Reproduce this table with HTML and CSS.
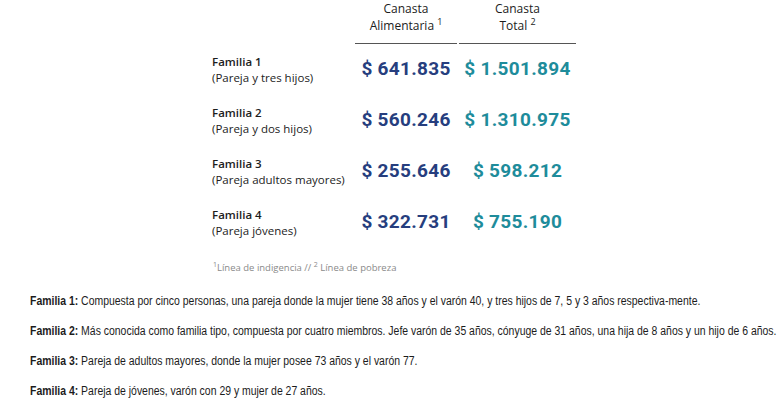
FILE: index.html
```html
<!DOCTYPE html>
<html lang="es">
<head>
<meta charset="utf-8">
<link rel="stylesheet" href="styles.css">
</head>
<body>
<div class="page">
  <div class="table">
    <div class="row head">
      <div class="label"></div>
      <div class="col c1"><span>Canasta</span><span>Alimentaria <sup>1</sup></span></div>
      <div class="col c2"><span>Canasta</span><span>Total <sup>2</sup></span></div>
    </div>
    <div class="row">
      <div class="label"><b>Familia 1</b><span>(Pareja y tres hijos)</span></div>
      <div class="num c1 blue">$ 641.835</div>
      <div class="num c2 teal">$ 1.501.894</div>
    </div>
    <div class="row">
      <div class="label"><b>Familia 2</b><span>(Pareja y dos hijos)</span></div>
      <div class="num c1 blue">$ 560.246</div>
      <div class="num c2 teal">$ 1.310.975</div>
    </div>
    <div class="row">
      <div class="label"><b>Familia 3</b><span>(Pareja adultos mayores)</span></div>
      <div class="num c1 blue">$ 255.646</div>
      <div class="num c2 teal">$ 598.212</div>
    </div>
    <div class="row">
      <div class="label"><b>Familia 4</b><span>(Pareja jóvenes)</span></div>
      <div class="num c1 blue">$ 322.731</div>
      <div class="num c2 teal">$ 755.190</div>
    </div>
    <p class="note"><sup>1</sup>Línea de indigencia // <sup>2</sup> Línea de pobreza</p>
  </div>
  <div class="desc">
    <p><b>Familia 1:</b> Compuesta por cinco personas, una pareja donde la mujer tiene 38 años y el varón 40, y tres hijos de 7, 5 y 3 años respectiva-mente.</p>
    <p><b>Familia 2:</b> Más conocida como familia tipo, compuesta por cuatro miembros. Jefe varón de 35 años, cónyuge de 31 años, una hija de 8 años y un hijo de 6 años.</p>
    <p><b>Familia 3:</b> Pareja de adultos mayores, donde la mujer posee 73 años y el varón 77.</p>
    <p><b>Familia 4:</b> Pareja de jóvenes, varón con 29 y mujer de 27 años.</p>
  </div>
</div>
</body>
</html>
```

FILE: styles.css
```css
html, body {
  margin: 0;
  padding: 0;
  background: #ffffff;
}
.page {
  width: 784px;
  height: 411px;
  overflow: hidden;
  font-family: "Open Sans", "Noto Sans", sans-serif;
  color: #1c1c1c;
}
.table {
  padding: 0 0 0 212px;
}
.row {
  display: flex;
  align-items: center;
  height: 51px;
}
.row.head {
  height: 44px;
  align-items: flex-end;
}
.label {
  width: 143px;
  display: flex;
  flex-direction: column;
  font-size: 11.5px;
  line-height: 16px;
}
.label b {
  font-weight: 600;
}
.c1 {
  width: 102px;
}
.c2 {
  width: 117px;
  margin-left: 2px;
}
.col {
  display: flex;
  flex-direction: column;
  align-items: center;
  font-size: 12px;
  line-height: 17px;
  padding-bottom: 9px;
  border-bottom: 1px solid #555;
}
sup {
  font-size: 9px;
  vertical-align: 5px;
  line-height: 0;
}
.num {
  text-align: center;
  font-family: Roboto, "Liberation Sans", sans-serif;
  font-weight: 700;
  font-size: 19px;
  letter-spacing: 0.3px;
  padding-bottom: 3px;
}
.blue { color: #263e7e; }
.teal { color: #1e8c9b; }
.note {
  margin: 13px 0 0 1px;
  font-size: 9.5px;
  color: #8a8a8a;
}
.note sup {
  font-size: 7px;
  vertical-align: 4px;
}
.desc {
  padding: 19px 0 0 30px;
  font-family: "Liberation Sans", Arial, sans-serif;
  font-size: 12.5px;
  color: #1c1c1c;
  white-space: nowrap;
}
.desc p {
  margin: 0;
  height: 30px;
  line-height: 16px;
  transform: scaleX(0.836);
  transform-origin: left center;
}
.desc b {
  font-weight: 700;
}
```
